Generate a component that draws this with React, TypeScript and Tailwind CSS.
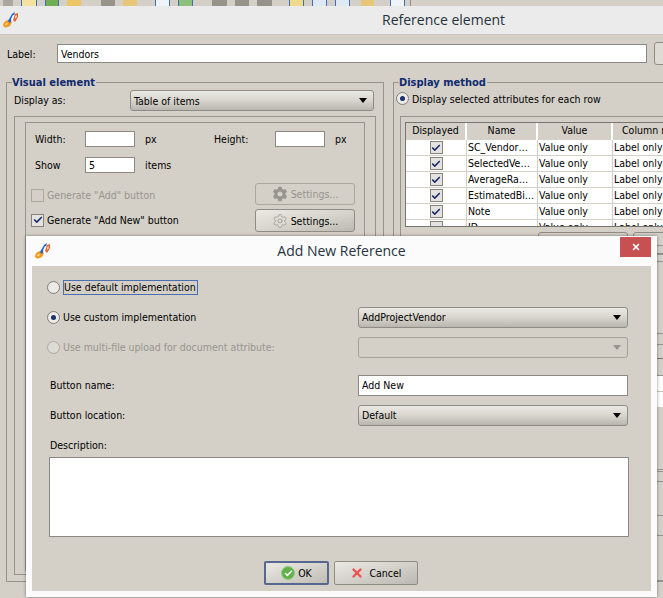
import { Check, Settings, X } from "lucide-react";
import { IoSettingsSharp } from "react-icons/io5";
import { ReactNode } from "react";

const FONT = "font-['DejaVu_Sans_Condensed','Noto_Sans',sans-serif]";

const rows = [
  { name: "SC_Vendor…", checked: true },
  { name: "SelectedVe…", checked: true },
  { name: "AverageRa…", checked: true },
  { name: "EstimatedBi…", checked: true },
  { name: "Note", checked: true },
  { name: "ID", checked: false },
];

function AppLogo({ className }: { className: string }) {
  return (
    <svg viewBox="0 0 16 16" className={className}>
      <path d="M0 13 C1 9 4 8 6 8 L9 10 L7 14 C4 16 0 16 0 13 Z" fill="#f29a1f" />
      <path d="M2 12 C3 11 4 11 5 11 L4 13 C3 14 2 13 2 12 Z" fill="#fbd58a" />
      <path d="M5 9 L9 2 L12 0 L11 4 L7 11 Z" fill="#1d62c9" />
      <path d="M8 7 L10 3 L12 3 L9 10 Z" fill="#ffffff" />
      <path d="M10 8 L12 2 L15 1 L15 5 L12 10 Z" fill="#e8632f" />
      <path d="M12 4 L14 3 L14 5 L12 7 Z" fill="#f9c9a8" />
    </svg>
  );
}

function Triangle({ disabled }: { disabled?: boolean }) {
  return (
    <svg viewBox="0 0 8 5" className="w-[8px] h-[5px]">
      <path d="M0 0 H8 L4 5 Z" fill={disabled ? "#98958e" : "#000"} />
    </svg>
  );
}

function Select({ value, disabled, className }: { value?: string; disabled?: boolean; className: string }) {
  return (
    <div
      className={`${className} h-[21px] rounded-[3px] border flex items-center justify-between pl-[3px] pr-[6px] ${
        disabled
          ? "border-[#a5a29b] bg-[#d4d0c8]"
          : "border-[#8f8c85] bg-linear-to-b from-[#ebe9e4] via-[#d8d5cd] to-[#b9b6af]"
      }`}
    >
      <span>{value}</span>
      <Triangle disabled={disabled} />
    </div>
  );
}

function TextBox({ value, className }: { value?: string; className: string }) {
  return (
    <div className={`${className} shrink-0 bg-white border border-[#8b8983] flex items-center pl-[3px]`}>{value}</div>
  );
}

function CheckBox({ checked, disabled }: { checked?: boolean; disabled?: boolean }) {
  return (
    <span
      className={`w-[13px] h-[13px] border flex items-center justify-center shrink-0 ${
        disabled ? "border-[#aaa79f] bg-[#d4d0c8]" : "border-[#85827c] bg-[#e4e3df]"
      }`}
    >
      {checked && <Check className="w-[10px] h-[10px] text-[#1c2f6f]" strokeWidth={4} />}
    </span>
  );
}

function Radio({ checked, disabled }: { checked?: boolean; disabled?: boolean }) {
  return (
    <span
      className={`w-[13px] h-[13px] rounded-full border flex items-center justify-center shrink-0 ${
        disabled ? "border-[#aaa79f] bg-[#dedbd5]" : "border-[#807d77] bg-[#ecebe8]"
      }`}
    >
      {checked && <span className="w-[5px] h-[5px] rounded-full bg-[#1c2f6f]" />}
    </span>
  );
}

function SettingsButton({ disabled, className }: { disabled?: boolean; className: string }) {
  return (
    <div
      className={`${className} w-[100px] rounded-[3px] border flex items-center justify-center gap-[3px] ${
        disabled
          ? "h-[22px] border-[#aaa79f] text-[#98958e]"
          : "h-[23px] border-[#8f8c85] bg-linear-to-br from-[#ebe9e4] via-[#d8d5cd] to-[#bcb9b2]"
      }`}
    >
      {disabled ? (
        <IoSettingsSharp className="w-[16px] h-[16px] text-[#98958e]" />
      ) : (
        <Settings className="w-[16px] h-[16px] text-[#a8a59e] fill-[#dedbd5]" strokeWidth={1.5} />
      )}
      <span>Settings...</span>
    </div>
  );
}

function GroupBox({ title, className, children }: { title: string; className: string; children: ReactNode }) {
  return (
    <div className={`${className} relative border border-[#97948d]`}>
      <span className="absolute left-[5px] top-[-8px] bg-[#d4d0c8] pr-[1px] text-[11px] leading-[16px] font-bold text-[#0f2a6e]">
        {title}
      </span>
      {children}
    </div>
  );
}

function ModalRow({ children }: { children: ReactNode }) {
  return <div className="h-[30px] flex items-center justify-between">{children}</div>;
}

const toolbar = [
  "w-[10px] bg-[#a9a79f]",
  "w-[16px] bg-[#f4e3a0] border-[#3f6fb5] border-x",
  "w-[14px] bg-[#6fae55] border-[#3f6fb5] border-x",
  "w-[14px] bg-[#ecc565]",
  "w-[14px] bg-[#95938c] ml-[12px]",
  "w-[14px] bg-[#e7c678]",
  "w-[15px] bg-[#eef3f8] border-[#3f6fb5] border-x ml-[10px]",
  "w-[15px] bg-[#8cc07c] border-[#3f6fb5] border-x",
  "w-[15px] bg-[#95938c] ml-[11px]",
  "w-[14px] bg-[#95938c]",
  "w-[15px] bg-[#95938c]",
  "w-[15px] bg-[#f1d98a] border-[#3f6fb5] border-x ml-[9px]",
  "w-[15px] bg-[#dfe9f5] border-[#3f6fb5] border-x",
  "w-[15px] bg-[#dfe9f5] border-[#3f6fb5] border-x",
  "w-[13px] bg-[#e7c678] ml-[3px]",
  "w-[15px] bg-[#eef3f8] border-[#3f6fb5] border-x ml-[8px]",
];

// what is left visible of the window's right side, next to the dialog
const strip = [
  "h-px bg-[#97948d]",
  "h-[6px]",
  "h-px bg-[#97948d]",
  "h-[71px]",
  "h-px bg-[#97948d]",
  "h-[10px]",
  "h-px bg-[#97948d]",
  "h-[13px]",
  "h-px bg-[#77756f]",
  "h-[16px]",
  "h-px bg-[#97948d]",
  "h-[15px] bg-white",
  "h-px bg-[#c9c6bf]",
  "h-[15px] bg-white",
  "h-[62px]",
  "h-px bg-[#97948d]",
  "h-px",
  "h-px bg-[#97948d]",
  "h-[9px]",
  "h-px bg-[#97948d]",
  "h-[33px]",
  "h-px bg-[#97948d]",
  "h-[19px]",
  "h-px bg-[#97948d]",
  "h-[44px]",
  "h-px bg-[#97948d]",
];

export default function App() {
  return (
    <div className={`${FONT} relative w-[663px] h-[598px] overflow-hidden bg-[#d4d0c8] text-[10.5px] leading-[14px] text-black`}>
      {/* toolbar behind the window */}
      <div className="h-[6px] flex gap-[8px] pl-[3px] overflow-hidden">
        {toolbar.map((c, i) => (
          <span key={i} className={`${c} h-[6px] shrink-0`} />
        ))}
        <span className="w-px h-[6px] bg-[#8f8c85] ml-[-3px]" />
      </div>

      {/* title bar */}
      <div className="h-[29px] bg-[#ebebeb] border-b border-[#c9c7c1] flex items-center pl-[3px]">
        <AppLogo className="w-[16px] h-[16px]" />
        <span className="ml-[363px] text-[14px] font-['Open_Sans',sans-serif] text-[#26323d]">Reference element</span>
      </div>

      {/* label row */}
      <div className="h-[47px] pl-[7px] pt-[9px] flex items-start">
        <span className="w-[50px] h-[19px] shrink-0 flex items-center">Label:</span>
        <TextBox value="Vendors" className="w-[590px] h-[19px]" />
        <span className="w-[20px] h-[23px] shrink-0 ml-[7px] mt-[-2px] border border-[#8f8c85] rounded-[3px] bg-[#dedbd5]" />
      </div>

      <div className="flex pl-[6px]">
        <GroupBox title="Visual element" className="w-[378px] h-[500px] shrink-0 px-[7px]">
          <div className="h-[33px] flex items-start pt-[7px]">
            <span className="w-[116px] h-[20px] flex items-center">Display as:</span>
            <Select value="Table of items" className="w-[244px]" />
          </div>
          <div className="h-[459px] border border-[#97948d] px-[10px] pt-[5px]">
            <div className="h-[449px] border border-[#97948d] pl-[5px] pt-[8px]">
              <div className="flex items-center h-[16px]">
                <span className="w-[54px] pl-[4px]">Width:</span>
                <TextBox className="w-[50px] h-[16px]" />
                <span className="ml-[10px] w-[69px]">px</span>
                <span className="w-[61px]">Height:</span>
                <TextBox className="w-[50px] h-[16px]" />
                <span className="ml-[10px]">px</span>
              </div>
              <div className="flex items-center h-[16px] mt-[10px]">
                <span className="w-[54px] pl-[4px]">Show</span>
                <TextBox value="5" className="w-[50px] h-[16px]" />
                <span className="ml-[10px]">items</span>
              </div>
              <div className="flex items-center justify-between h-[22px] mt-[10px] pr-[9px] text-[#98958e]">
                <span className="flex items-center gap-[3px] mt-[2px]">
                  <CheckBox disabled />
                  Generate "Add" button
                </span>
                <SettingsButton disabled className="text-[#98958e]" />
              </div>
              <div className="flex items-center justify-between h-[23px] mt-[4px] pr-[9px]">
                <span className="flex items-center gap-[3px] mt-[-1px]">
                  <CheckBox checked />
                  Generate "Add New" button
                </span>
                <SettingsButton className="" />
              </div>
            </div>
          </div>
        </GroupBox>

        <GroupBox title="Display method" className="w-[300px] h-[500px] ml-[9px] shrink-0 pl-[2px]">
          <div className="h-[33px] flex items-center gap-[3px] pb-[2px]">
            <Radio checked />
            Display selected attributes for each row
          </div>
          <div className="ml-[4px] border border-[#97948d] pl-[4px] pt-[5px] h-[130px]">
            <div className="w-[290px] h-[105px] border border-[#77756f] bg-white overflow-hidden">
              <div className="grid grid-cols-[61px_71px_75px_1fr] h-[17px] bg-[#d4d0c8] text-center">
                <span className="border-r-2 border-white">Displayed</span>
                <span className="border-r-2 border-white">Name</span>
                <span className="border-r-2 border-white">Value</span>
                <span className="text-left pl-[9px] whitespace-nowrap">Column name</span>
              </div>
              {rows.map((r) => (
                <div key={r.name} className="grid grid-cols-[61px_71px_75px_1fr] h-[16px] border-b border-[#d4d0c8]">
                  <span className="border-r border-[#d4d0c8] flex justify-center items-center">
                    <CheckBox checked={r.checked} />
                  </span>
                  <span className="border-r border-[#d4d0c8] pl-[1px] whitespace-nowrap overflow-hidden">{r.name}</span>
                  <span className="border-r border-[#d4d0c8] pl-[1px]">Value only</span>
                  <span className="pl-[1px] whitespace-nowrap">Label only</span>
                </div>
              ))}
            </div>
            <div className="flex gap-[5px] pl-[133px] mt-[5px]">
              <span className="w-[90px] h-[22px] shrink-0 border border-[#8f8c85] rounded-[3px]" />
              <span className="w-[60px] h-[22px] shrink-0 border border-[#8f8c85] rounded-[3px]" />
            </div>
          </div>
        </GroupBox>
      </div>

      <div className="absolute right-0 top-[254px] w-[6px] flex flex-col">
        {strip.map((c, i) => (
          <span key={i} className={`${c} block shrink-0`} />
        ))}
      </div>

      {/* modal dialog on top */}
      <div className="absolute left-[26px] top-[236px] w-[631px] h-[361px] bg-[#fbfbfb] shadow-[0_0_3px_rgba(0,0,0,0.45)] flex flex-col">
        <div className="h-[30px] shrink-0 relative flex items-center justify-center">
          <AppLogo className="absolute left-[9px] top-[7px] w-[16px] h-[16px]" />
          <span className="text-[14px] font-['Open_Sans',sans-serif] text-[#26323d]">Add New Reference</span>
          <span className="absolute right-[6px] top-[1px] w-[31px] h-[20px] bg-[#c75050] flex items-center justify-center">
            <X className="w-[10px] h-[10px] text-white" strokeWidth={4} />
          </span>
        </div>
        <div className="mx-[6px] h-[325px] bg-[#d4d0c8] flex flex-col pt-[6px] pl-[15px] pr-[23px]">
          <ModalRow>
            <span className="flex items-center gap-[3px]">
              <Radio />
              <span className="border border-[#4a6fb0] pr-[1px] h-[15px] flex items-center">Use default implementation</span>
            </span>
          </ModalRow>
          <ModalRow>
            <span className="flex items-center gap-[3px]">
              <Radio checked />
              Use custom implementation
            </span>
            <Select value="AddProjectVendor" className="w-[270px]" />
          </ModalRow>
          <ModalRow>
            <span className="flex items-center gap-[3px] text-[#98958e]">
              <Radio disabled />
              Use multi-file upload for document attribute:
            </span>
            <Select disabled className="w-[270px]" />
          </ModalRow>
          <div className="h-[8px] shrink-0" />
          <ModalRow>
            <span className="pl-[3px]">Button name:</span>
            <TextBox value="Add New" className="w-[270px] h-[21px]" />
          </ModalRow>
          <ModalRow>
            <span className="pl-[3px]">Button location:</span>
            <Select value="Default" className="w-[270px]" />
          </ModalRow>
          <div className="h-[27px] shrink-0 flex items-end pl-[3px] pb-[5px]">Description:</div>
          <div className="pl-[2px] mr-[-2px]">
            <TextBox className="w-[580px] h-[80px]" />
          </div>
          <div className="flex gap-[5px] mt-[24px] pl-[217px]">
            <div className="w-[65px] h-[24px] rounded-[2px] border-2 border-[#56688f] bg-linear-to-br from-[#ebe9e4] to-[#c0bdb6] flex items-center justify-center gap-[3px]">
              <span className="w-[14px] h-[14px] rounded-full bg-[#62b04a] border border-[#8fcf7f] flex items-center justify-center">
                <Check className="w-[9px] h-[9px] text-white" strokeWidth={4} />
              </span>
              OK
            </div>
            <div className="w-[84px] h-[24px] rounded-[2px] border border-[#8f8c85] bg-linear-to-br from-[#ebe9e4] to-[#bcb9b2] flex items-center justify-center gap-[5px]">
              <X className="w-[14px] h-[14px] text-[#ec5050]" strokeWidth={4} />
              Cancel
            </div>
          </div>
        </div>
      </div>
    </div>
  );
}
